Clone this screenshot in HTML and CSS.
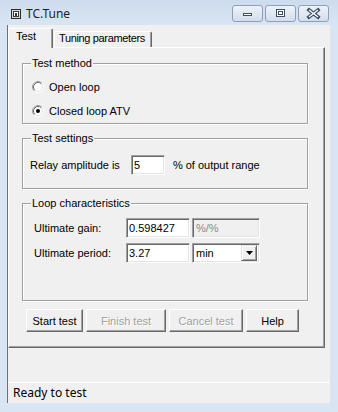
FILE: index.html
```html
<!DOCTYPE html>
<html lang="en">
<head>
  <meta charset="UTF-8">
  <title>TC.Tune</title>
  <link rel="stylesheet" href="styles.css">
</head>
<body>
  <div class="window">
    <!-- Title bar -->
    <div class="titlebar">
      <svg class="app-icon" width="10" height="10" viewBox="0 0 10 10">
        <rect x="0.5" y="0.5" width="9" height="9" fill="#d9d9d9" stroke="#2b2b2b"/>
        <rect x="2.5" y="2.5" width="5" height="5" fill="#fff" stroke="#3a3a3a"/>
        <rect x="4" y="4" width="2" height="3" fill="#3a3a3a"/>
      </svg>
      <span class="title">TC.Tune</span>
      <div class="caption-buttons">
        <span class="cap-btn">
          <svg width="29" height="15" viewBox="0 0 29 15">
            <rect x="10.5" y="7.5" width="8" height="2" fill="#fff" stroke="#3b4c63"/>
          </svg>
        </span>
        <span class="cap-btn">
          <svg width="29" height="15" viewBox="0 0 29 15">
            <rect x="10.5" y="3.5" width="8" height="7" fill="#fff" stroke="#3b4c63"/>
            <rect x="12.5" y="5.5" width="4" height="3" fill="none" stroke="#3b4c63"/>
          </svg>
        </span>
        <span class="cap-btn">
          <svg width="29" height="15" viewBox="0 0 29 15">
            <path d="M10 4 L19 11 M19 4 L10 11" stroke="#3b4c63" stroke-width="3.6" stroke-linecap="square"/>
            <path d="M10 4 L19 11 M19 4 L10 11" stroke="#fff" stroke-width="1.4"/>
          </svg>
        </span>
      </div>
    </div>

    <!-- Client area -->
    <div class="client">
      <div class="tabs">
        <div class="tab active">Test</div>
        <div class="tab">Tuning parameters</div>
      </div>

      <div class="tab-panel">
        <fieldset class="group">
          <legend>Test method</legend>
          <div class="group-body group-method">
            <label class="radio-row">
              <svg class="radio" width="12" height="12" viewBox="0 0 12 12">
                <circle cx="6" cy="6" r="4.5" fill="#fff"/>
                <path d="M9.89 2.11 A5.5 5.5 0 0 0 2.11 9.89" fill="none" stroke="#a0a0a0"/>
                <path d="M9.89 2.11 A5.5 5.5 0 0 1 2.11 9.89" fill="none" stroke="#fff"/>
                <path d="M9.18 2.82 A4.5 4.5 0 0 0 2.82 9.18" fill="none" stroke="#696969"/>
                <path d="M9.18 2.82 A4.5 4.5 0 0 1 2.82 9.18" fill="none" stroke="#e3e3e3"/>
              </svg>
              Open loop
            </label>
            <label class="radio-row">
              <svg class="radio" width="12" height="12" viewBox="0 0 12 12">
                <circle cx="6" cy="6" r="4.5" fill="#fff"/>
                <path d="M9.89 2.11 A5.5 5.5 0 0 0 2.11 9.89" fill="none" stroke="#a0a0a0"/>
                <path d="M9.89 2.11 A5.5 5.5 0 0 1 2.11 9.89" fill="none" stroke="#fff"/>
                <path d="M9.18 2.82 A4.5 4.5 0 0 0 2.82 9.18" fill="none" stroke="#696969"/>
                <path d="M9.18 2.82 A4.5 4.5 0 0 1 2.82 9.18" fill="none" stroke="#e3e3e3"/>
                <circle cx="6" cy="6" r="2" fill="#000"/>
              </svg>
              Closed loop ATV
            </label>
          </div>
        </fieldset>

        <fieldset class="group">
          <legend>Test settings</legend>
          <div class="group-body group-settings">
            <div class="field-row">
              <span>Relay amplitude is</span>
              <input class="edit edit-small" type="text" value="5">
              <span class="unit">% of output range</span>
            </div>
          </div>
        </fieldset>

        <fieldset class="group">
          <legend>Loop characteristics</legend>
          <div class="group-body group-loop">
            <div class="field-row">
              <span class="field-label">Ultimate gain:</span>
              <input class="edit edit-value" type="text" value="0.598427">
              <span class="edit edit-readonly">%/%</span>
            </div>
            <div class="field-row">
              <span class="field-label">Ultimate period:</span>
              <input class="edit edit-value" type="text" value="3.27">
              <span class="edit combo">
                <span class="combo-text">min</span>
                <span class="combo-arrow">
                  <svg width="7" height="4" viewBox="0 0 7 4"><path d="M0 0 H7 L3.5 4 Z" fill="#000"/></svg>
                </span>
              </span>
            </div>
          </div>
        </fieldset>

        <div class="button-row">
          <button class="btn btn-start">Start test</button>
          <button class="btn btn-finish" disabled>Finish test</button>
          <button class="btn btn-cancel" disabled>Cancel test</button>
          <button class="btn btn-help">Help</button>
        </div>
      </div>

      <div class="statusbar">Ready to test</div>
    </div>
  </div>
</body>
</html>
```

FILE: styles.css
```css
/* Page / window frame */
html, body {
  margin: 0;
}

body {
  width: 338px;
  height: 412px;
  overflow: hidden;
  background: #d9e5f3;
  font-family: "Liberation Sans", Arial, sans-serif;
  font-size: 11px;
  color: #000;
}

.window {
  display: flex;
  flex-direction: column;
  height: 412px;
}

/* Title bar */
.titlebar {
  height: 25px;
  flex: none;
  display: flex;
  align-items: flex-start;
  padding: 0 9px 0 11px;
  background: linear-gradient(#cddcee, #d9e5f3);
}

.app-icon {
  margin-top: 9px;
}

.title {
  margin: 5px 0 0 5px;
  font-family: "Noto Sans", sans-serif;
  font-size: 12px;
  line-height: 17px;
  color: #1e1e1e;
}

.caption-buttons {
  margin-left: auto;
  margin-top: 5px;
  display: flex;
  gap: 2px;
}

.cap-btn {
  width: 31px;
  height: 17px;
  box-sizing: border-box;
  border: 1px solid #8d9fb6;
  border-radius: 3px;
  background: linear-gradient(#eef3fa, #d3deec);
  display: flex;
}

/* Client area */
.client {
  flex: 1;
  margin: 0 8px 9px 7px;
  background: #f0f0f0;
  border-left: 1px solid #707070;
  display: flex;
  flex-direction: column;
}

/* Tabs */
.tabs {
  height: 22px;
  flex: none;
  display: flex;
  align-items: flex-end;
}

.tab {
  height: 16px;
  box-sizing: border-box;
  margin-left: 1px;
  padding-left: 4px;
  width: 98px;
  line-height: 12px;
  letter-spacing: -0.35px;
  border-top: 1px solid #fff;
  border-left: 1px solid #fff;
  border-right: 1px solid #696969;
  border-radius: 2px 2px 0 0;
  box-shadow: inset -1px 0 #a0a0a0;
  background: #f0f0f0;
  white-space: nowrap;
}

.tab.active {
  position: relative;
  z-index: 1;
  margin-left: 0;
  margin-bottom: -1px;
  width: 45px;
  height: 20px;
  padding-left: 7px;
  line-height: 15px;
  letter-spacing: 0;
}

/* Tab panel */
.tab-panel {
  height: 301px;
  box-sizing: border-box;
  margin-right: 5px;
  padding: 9px 16px 0 13px;
  border-top: 1px solid #fff;
  border-left: 1px solid #fff;
  border-right: 1px solid #696969;
  border-bottom: 1px solid #696969;
  box-shadow: inset -1px -1px #a0a0a0;
}

/* Group boxes */
.group {
  margin: 0 0 8px;
  padding: 0;
  min-width: 0;
  border: 1px solid #a0a0a0;
  box-shadow: 1px 1px 0 #fff, inset 1px 1px 0 #fff;
}

.group legend {
  margin-left: 8px;
  padding: 0 1px;
  line-height: 13px;
  background: #f0f0f0;
}

.group-method {
  padding: 5px 0 0 9px;
}

.group-settings {
  padding: 10px 0 13px 7px;
}

.group-loop {
  padding: 8px 0 37px 11px;
}

.radio-row {
  height: 24px;
  display: flex;
  align-items: center;
  gap: 5px;
}

.field-row {
  height: 20px;
  display: flex;
  align-items: center;
}

.group-loop .field-row + .field-row {
  margin-top: 5px;
}

.field-label {
  width: 92px;
}

/* Edit boxes */
.edit {
  height: 20px;
  box-sizing: border-box;
  margin: 0;
  padding: 0 0 0 1px;
  border-top: 1px solid #a0a0a0;
  border-left: 1px solid #a0a0a0;
  border-right: 1px solid #fff;
  border-bottom: 1px solid #fff;
  box-shadow: inset 1px 1px #696969, inset -1px -1px #e3e3e3;
  background: #fff;
  font-family: "Liberation Sans", Arial, sans-serif;
  font-size: 11px;
  color: #000;
  outline: none;
}

.edit-small {
  width: 34px;
  margin-left: 11px;
  padding-left: 2px;
}

.unit {
  margin-left: 8px;
}

.edit-value {
  width: 64px;
  padding-left: 2px;
}

.edit-readonly {
  width: 68px;
  margin-left: 2px;
  padding-left: 3px;
  display: flex;
  align-items: center;
  background: #f0f0f0;
  color: #8a8a8a;
}

.combo {
  width: 68px;
  margin-left: 2px;
  padding: 2px 2px 2px 3px;
  display: flex;
  align-items: center;
}

.combo-text {
  flex: 1;
}

.combo-arrow {
  width: 16px;
  height: 16px;
  box-sizing: border-box;
  border-top: 1px solid #e3e3e3;
  border-left: 1px solid #e3e3e3;
  border-right: 1px solid #696969;
  border-bottom: 1px solid #696969;
  box-shadow: inset 1px 1px #fff, inset -1px -1px #a0a0a0;
  background: #f0f0f0;
  display: flex;
  align-items: center;
  justify-content: center;
}

/* Buttons */
.button-row {
  margin-top: 1px;
  padding-left: 4px;
  display: flex;
  gap: 3px;
}

.btn {
  height: 23px;
  box-sizing: border-box;
  padding: 0;
  border-top: 1px solid #fff;
  border-left: 1px solid #fff;
  border-right: 1px solid #696969;
  border-bottom: 1px solid #696969;
  box-shadow: inset -1px -1px #a0a0a0;
  background: #f0f0f0;
  font-family: "Liberation Sans", Arial, sans-serif;
  font-size: 11px;
  color: #000;
}

.btn:disabled {
  color: #a0a0a0;
  text-shadow: 1px 1px #fff;
}

.btn-start { width: 57px; }
.btn-finish { width: 80px; }
.btn-cancel { width: 74px; }
.btn-help { width: 53px; }

/* Status bar */
.statusbar {
  margin-top: auto;
  height: 21px;
  box-sizing: border-box;
  padding-left: 5px;
  border-top: 1px solid #fff;
  font-family: "Noto Sans", sans-serif;
  font-size: 12px;
  line-height: 20px;
}
```
